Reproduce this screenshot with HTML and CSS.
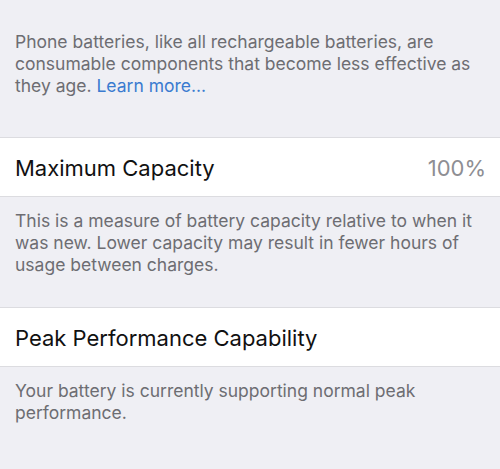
FILE: index.html
```html
<!DOCTYPE html>
<html lang="en">
<head>
	<meta charset="UTF-8">
	<title>Battery Health</title>
	<link rel="stylesheet" href="styles.css">
</head>
<body>
    <div class="settings">
        <p class="note intro">
            Phone batteries, like all rechargeable batteries, are consumable components that become less effective as they age. <a class="link" href="#">Learn more...</a>
        </p>

        <div class="cell">
            <span class="cell_title">Maximum Capacity</span>
            <span class="cell_value">100%</span>
        </div>
        <p class="note">
            This is a measure of battery capacity relative to when it was new. Lower capacity may result in fewer hours of usage between charges.
        </p>

        <div class="cell second">
            <span class="cell_title">Peak Performance Capability</span>
        </div>
        <p class="note">
            Your battery is currently supporting normal peak performance.
        </p>
    </div>
</body>
</html>
```

FILE: styles.css
```css
body{
    margin: 0;
    background: #efeff4;
    font-family: Inter, "Noto Sans", sans-serif;
}
.settings{
    display: flex;
    flex-direction: column;
}
.note{
    margin: 0;
    padding: 13px 15px 0 15px;
    font-size: 17.5px;
    line-height: 22px;
    color: #6d6d72;
}
.intro{
    padding-top: 31px;
    padding-bottom: 40px;
}
.link{
    color: #3a7bd0;
    text-decoration: none;
}
.cell{
    height: 56px;
    padding: 2px 14px 0 15px;
    background: #fff;
    border-top: 1px solid #dcdce0;
    border-bottom: 1px solid #dcdce0;
    display: flex;
    align-items: center;
    justify-content: space-between;
}
.second{
    margin-top: 31px;
}
.cell_title{
    font-size: 22px;
    color: #111;
}
.cell_value{
    font-size: 22px;
    color: #8e8e93;
}
```
